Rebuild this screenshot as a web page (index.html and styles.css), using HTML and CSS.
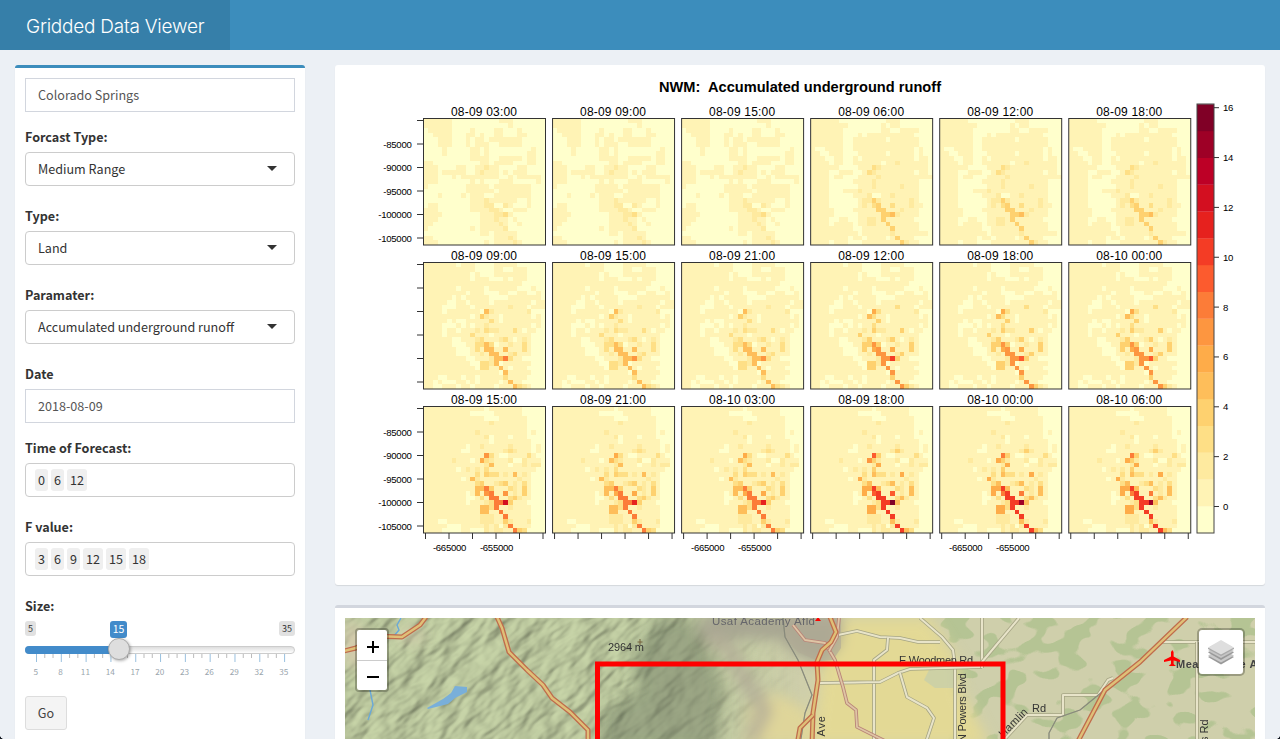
FILE: index.html
```html
<!DOCTYPE html>
<html lang="en">
<head>
<meta charset="utf-8">
<title>Gridded Data Viewer</title>
<link rel="stylesheet" href="styles.css">
</head>
<body>
<header class="header"><div class="logo"><span>Gridded Data Viewer</span></div></header>
<div class="content">
  <aside class="box sidebar">
    <div class="control input">Colorado Springs</div>
    <label class="label">Forcast Type:</label>
    <div class="control select">Medium Range<i class="caret"></i></div>
    <label class="label wide">Type:</label>
    <div class="control select">Land<i class="caret"></i></div>
    <label class="label wide">Paramater:</label>
    <div class="control select">Accumulated underground runoff<i class="caret"></i></div>
    <label class="label wide">Date</label>
    <div class="control input">2018-08-09</div>
    <label class="label">Time of Forecast:</label>
    <div class="control tags"><span>0</span><span>6</span><span>12</span></div>
    <label class="label wide">F value:</label>
    <div class="control tags"><span>3</span><span>6</span><span>9</span><span>12</span><span>15</span><span>18</span></div>
    <label class="label wide">Size:</label>
    <div class="slider">
      <div class="bounds"><span>5</span><span>35</span><b>15</b></div>
      <div class="track"><div class="fill"></div><div class="handle"></div></div>
      <svg class="ticks" width="270" height="8" id="ticks"></svg>
      <div class="scale"><span>5</span><span>8</span><span>11</span><span>14</span><span>17</span><span>20</span><span>23</span><span>26</span><span>29</span><span>32</span><span>35</span></div>
    </div>
    <button class="go">Go</button>
  </aside>
  <main class="main">
    <section class="box plotbox"><svg id="plot" width="930" height="520" viewBox="335 65 930 520"></svg></section>
    <section class="box mapbox">
      <div class="map">
        <svg id="map" width="910" height="121" viewBox="345 618 910 121">
          <defs>
            <filter id="relief" x="0" y="0" width="100%" height="100%" color-interpolation-filters="sRGB">
              <feTurbulence type="fractalNoise" baseFrequency="0.025 0.055" numOctaves="3" seed="8"/>
              <feDiffuseLighting surfaceScale="4.5" diffuseConstant="1.08" lighting-color="#c3cfa5"><feDistantLight azimuth="225" elevation="62"/></feDiffuseLighting>
            </filter>
            <filter id="patches" x="0" y="0" width="100%" height="100%" color-interpolation-filters="sRGB">
              <feTurbulence type="fractalNoise" baseFrequency="0.035 0.05" numOctaves="2" seed="21"/>
              <feColorMatrix values="0 0 0 0 .71  0 0 0 0 .77  0 0 0 0 .58  22 0 0 0 -11.8"/>
            </filter>
            <filter id="soft"><feGaussianBlur stdDeviation="7"/></filter>
            <linearGradient id="fade"><stop offset="0" stop-color="#fff"/><stop offset=".65" stop-color="#fff"/><stop offset=".95" stop-color="#000"/></linearGradient>
            <mask id="hills"><rect x="345" y="618" width="480" height="130" fill="url(#fade)"/></mask>
          </defs>
          <rect x="345" y="618" width="910" height="130" fill="#cfcfab"/>
          <rect x="345" y="618" width="480" height="130" fill="#b5c197" mask="url(#hills)"/>
          <g mask="url(#hills)"><g transform="rotate(-38 585 680)"><rect x="300" y="350" width="650" height="650" filter="url(#relief)" opacity=".7"/></g></g>
          <rect x="940" y="618" width="315" height="130" filter="url(#patches)"/>
          <g filter="url(#soft)">
            <path d="M826 618H930L960 665V690L990 745H812L820 680Z" fill="#e3d995"/>
            <path d="M750 705Q770 680 812 715V745H742Z" fill="#dfd59a"/>
            <path d="M700 615H842L840 645L820 665L795 655L780 640L700 638Z" fill="#a7a692"/>
            <path d="M708 635L730 650L745 680L765 710L750 740" fill="none" stroke="#b4ae98" stroke-width="13"/>
            <path d="M655 618H690L710 650L725 690L715 748H600V715L640 690L630 665Z" fill="#707c61" opacity=".5"/>
            <path d="M345 618L365 635V665H345M402 630H422V640H402Z" fill="#d6cbad"/>
          </g>
          <path d="M827 618H841V648L833 660L818 661L798 652L785 638V618Z" fill="#b0aa95" opacity=".65"/>
          <path d="M932 664H955V688H935L924 680Z" fill="#c3cdac" opacity=".7"/>
          <path d="M427 708L443 699L451 693L455 686L467 687V692L455 698L448 704L428 709Z" fill="#79afd9"/>
          <path d="M401 618L397 625L399 630L393 637M370 690L373 705L368 720" fill="none" stroke="#69a9d8" stroke-width="1.4"/>
          <g id="roads"></g>
          <g class="maplabel">
            <text x="712" y="625" textLength="103" class="grey">Usaf Academy Afld</text>
            <text x="608" y="651" textLength="36">2964 m</text>
            <path d="M640 639V645M637.500 642H642.500" stroke="#75623c"/>
            <text x="899" y="664" textLength="74">E Woodmen Rd</text>
            <text transform="translate(966 742) rotate(-90)" textLength="69">N Powers Blvd</text>
            <text transform="translate(825 747) rotate(-90)" textLength="31">a Ave</text>
            <text transform="translate(1003 738) rotate(-45)" textLength="36">Hamlin</text>
            <text x="1032" y="712">Rd</text>
            <text transform="translate(1208 742) rotate(-90)">s Rd</text>
            <text x="1176" y="668" textLength="85" class="place">Meadowlake Ai</text>
          </g>
          <path d="M818 617L821 621H815Z" fill="#f00"/>
          <path d="M1171 652L1172.300 650L1173.600 652V656.500L1180 660V662L1173.600 660.500V664L1176 666H1168.700L1171 664V660.500L1164 662V660L1171 656.500Z" fill="#f00"/>
          <rect x="597.500" y="664" width="405.500" height="120" fill="none" stroke="#f00" stroke-width="5"/>
        </svg>
        <div class="zoomer"><span><svg width="14" height="14"><path d="M1 7H13M7 1V13" stroke="#000" stroke-width="2"/></svg></span><span><svg width="14" height="14"><path d="M1 7H13" stroke="#000" stroke-width="2"/></svg></span></div>
        <div class="layers"><svg width="26" height="26"><path d="M0 18L13 11L26 18L13 25.500Z" fill="#999"/><path d="M0 16.500L13 9.500L26 16.500L13 23.500Z" fill="#c9c9c9"/><path d="M0 13.500L13 6.500L26 13.500L13 21Z" fill="#999"/><path d="M0 12L13 5L26 12L13 19Z" fill="#c5c5c5"/><path d="M0 9L13 2L26 9V10L13 17L0 10Z" fill="#aaa"/><path d="M0 8.500L13 1L26 8.500L13 15.500Z" fill="#dedede"/></svg></div>
      </div>
    </section>
  </main>
</div>
<div class="corners"></div>
<script src="app.js"></script>
</body>
</html>
```
FILE: styles.css
```css
* { box-sizing: border-box; }
body { margin: 0; height: 739px; overflow: hidden; background: #ecf0f5; color: #333; font: 12.6px/20px "Noto Sans CJK SC", "Noto Sans", sans-serif; }
.header { height: 50px; background: #3c8dbc; }
.logo { width: 230px; height: 50px; padding-left: 26px; background: #367fa9; color: #fff; font: 300 19px/54px Inter, "Liberation Sans", sans-serif; letter-spacing: -.24px; white-space: nowrap; }
.content { display: flex; align-items: flex-start; gap: 30px; height: 689px; padding: 15px 15px 0; }
.box { background: #fff; border-radius: 3px; box-shadow: 0 1px 1px rgba(0,0,0,.1); }
.sidebar { width: 290px; height: 674px; padding: 10px 10px 0; border-top: 3px solid #3c8dbc; border-radius: 3px 3px 0 0; flex: none; }
.control { height: 34px; padding: 0 12px; line-height: 31px; border: 1px solid #ccc; border-radius: 4px; white-space: nowrap; }
.input { border-color: #d2d6de; border-radius: 0; color: #555; }
.select { display: flex; justify-content: space-between; }
.caret { margin: 13px 5px 0 0; height: 0; border: 5px solid transparent; border-top-color: #333; border-bottom: 0; }
.label { display: block; margin: 15px 0 5px; font-weight: 700; }
.wide { margin-top: 20px; }
.tags { display: flex; gap: 3px; padding: 5px 9px; }
.tags span { height: 22px; line-height: 22px; padding: 0 3px; background: #efefef; border-radius: 3px; }
.slider { height: 60px; }
.bounds { position: relative; display: flex; justify-content: space-between; height: 25px; }
.bounds span { height: 15px; padding: 0 3px; line-height: 15px; font-size: 9px; background: #e1e1e1; border-radius: 3px; }
.bounds b { position: absolute; left: 85px; top: 0; width: 17px; height: 17px; font: 10.500px/15px "Noto Sans CJK SC", sans-serif; text-align: center; color: #fff; background: #428bca; border-radius: 3px; }
.track { position: relative; height: 8px; background: linear-gradient(#ddd, #fff); border: 1px solid #ccc; border-radius: 8px; }
.fill { width: 94px; height: 8px; margin: -1px; background: #428bca; border-radius: 8px 0 0 8px; }
.handle { position: absolute; left: 82px; top: -9px; width: 22px; height: 22px; border: 1px solid #aaa; border-radius: 50%; background: #dedede; box-shadow: 1px 1px 3px rgba(0,0,0,.3); }
.ticks { display: block; }
.scale { display: flex; margin: 4px -1.600px 0; font-size: 8.200px; line-height: 10px; color: #9aa5ad; }
.scale span { width: 24.800px; flex: none; text-align: center; }
.go { display: block; margin-top: 15px; width: 42px; height: 34px; padding: 0; border: 1px solid #ddd; border-radius: 3px; background: #f4f4f4; color: #444; font: inherit; }
.main { display: flex; flex-direction: column; gap: 20px; width: 930px; height: 674px; }
.plotbox { height: 520px; flex: none; }
.plotbox svg { display: block; font-family: "Liberation Sans", Arial, sans-serif; }
.plotbox .axis { font-size: 9.600px; letter-spacing: -.28px; }
.mapbox { height: 134px; padding: 10px 10px 0; border-top: 3px solid #d2d6de; border-radius: 3px 3px 0 0; }
.map { position: relative; height: 121px; overflow: hidden; }
.map > svg { display: block; }
.maplabel { font: 11px "Liberation Sans", Arial, sans-serif; fill: #333; }
.maplabel .grey { fill: #66666b; font-size: 11.500px; }
.maplabel .place { font-weight: 700; fill: #444; }
.zoomer { position: absolute; left: 10px; top: 10px; width: 34px; height: 64px; border: 2px solid rgba(0,0,0,.25); border-radius: 4px; background: #fff; background-clip: padding-box; }
.zoomer span { display: flex; align-items: center; justify-content: center; height: 30px; padding: 4px 0 0 2px; }
.zoomer span + span { border-top: 1px solid #ccc; padding-top: 2px; }
.layers { position: absolute; left: 852px; top: 10px; width: 48px; height: 48px; display: flex; align-items: center; justify-content: center; border: 2px solid rgba(0,0,0,.25); border-radius: 5px; background: #fff; background-clip: padding-box; }
.corners { position: absolute; inset: auto 0 0 0; height: 5px; background: radial-gradient(circle at 5px 0, transparent 5px, #161b24 5.500px) 0 0 / 5px 5px no-repeat, radial-gradient(circle at 0 0, transparent 5px, #161b24 5.500px) 100% 0 / 5px 5px no-repeat; }
```
FILE: app.js
```js
const colors = ['#ffffcc','#fff3b5','#feea9f','#fedf86','#fed16f','#febe5a','#feac49','#fd9640','#fc7c38','#fc5b2e','#f43c25','#e6211e','#d30f20','#bd0026','#9e0026','#800026'];

// Cumulative runoff levels, 26 cells across and 27 down
const hot = [
'..........................','..........................','..........................','..............2...........',
'..........................','...........2..............','.............2............','..........................',
'............2.....2.......','.................242......','.............94.......3...','......2.....742...2..2....',
'.............26......2.22.','.........2.2.4............','...........3.533.2.6.2....','..........62........2.....',
'...........35..235.2.3....','...........66a5...32.5....','...........6.9a..9.2.5....','............3.aa..352.....',
'.............23aaf5.......','............663a..2.......','............66..a.........','............222..a........',
'............222..52...2...','.............2.2.2a.......','.............2.22..a53....'];

// Cells outside the wet area
const masks = {
A:['11111100000000001110000000','11111100000000000010000000','01111100001000011000100000','00111100011010011000110000','00011100010110111111100000','00011100010111001111100000','00001000001101000000000100','00001000001101000000001100','00000000001111001111101100','11000000000011011110001100','11100001100111110000110000','11101111100111110101110000','11100010111111110010111110','11100000001010001110000010','10000000011111011111111000','00000000011111101111111000','00010000101110011111111000','00000000001111111111001000','01100000001111100110001000','11100000001111111001110000','11110000000011111110000000','11100000000011111101000000','11000000000011111100100000','10000000001011111100000000','00000000000011011111000000','11000000000000011111000000','11100000000001011111100000'],
B:['11111100000000001110000000','11111111000000010110000000','11111110000000011001111000','11111110001011011111110000','11111110011111110111111000','11111110011111111111111000','10011110011111111111110100','11001110001111110111110100','11100110010111111111110110','11110110011111101111111110','11111100001111011111110110','11110011100111111111110110','11110110001111111111111011','11110000011111111111111000','11110000001111111111111000','11110001111111111111111000','11110000011110001111111000','11110000001110111111111000','11110000001111111111111100','11111000011111111111111000','11111000001111111111111000','11110011001111111111110000','11110111101111111111111000','11111111100111111111111000','11111111110111011111111110','11111111011011110111110000','11110111000111101111111000'],
C:['11111110111000011111000000','11111111111000011001110000','11111111110100011111110000','11111111110111000101110000','11111111111111111111100000','11111110111110111111000100','11111111101110001100110010','11111101011111000011111110','11111001101111011111111011','11110001110111111111110111','11110111111100111111111000','11111111110111110111111010','11111010011111110111111110','11110001010111111111111010','11110110111110111111101100','11110111110111011111111000','11111100111111110110111000','11111100011111101111111000','11111110001111111111111000','11111110001111111101111000','11111111100111111111100000','11111111110011110111111000','11111111111011111101110000','11111111111111110111111000','11100111011011111111110000','11010001101011110111100000','11001110110111101111111000'],
E:['11111111111110111111100000','11111111110000011111100000','11111111111110001111110000','11111111111111011111110000','11111111111111111111110000','11111111111111111111110100','11111111111111011101110000','11111111111111011111111000','11111111101111111111111010','11111111001111111111111010','11111111111111110011111100','11111111110111111110011110','11111111111111111101111110','11111110111111111111111100','11111111111111111111111000','11111111011111111111111000','11111111111111111111111000','11111111111111111111111000','11111111101111111111111000','11111111100111111111111000','11111111101111111111110000','11111111111111111101111000','11111111111111111111111000','11111111111111111111111000','11100111111111111111111000','11111000111110110111111000','11110000110001111111110000']};
const plot = document.getElementById('plot');
const maps = {
A:{6:1,7:2,9:2,a:2,f:3}, B:{2:1,3:1,4:2,5:2,6:2,7:3,9:3,a:4,f:5},
C:{3:2,4:2,5:3,6:3,7:4,9:5,a:5,f:8}, D:{3:2,4:3,5:4,6:4,7:5,9:6,a:7,f:10},
E:{2:2,3:3,4:3,5:4,6:5,7:6,9:7,a:8,f:12}, F:{2:2,3:3,4:4,5:5,6:6,7:7,9:9,a:10,f:15}};
const titles = ['08-09 03:00','08-09 09:00','08-09 15:00','08-09 06:00','08-09 12:00','08-09 18:00','08-09 09:00','08-09 15:00','08-09 21:00','08-09 12:00','08-09 18:00','08-10 00:00','08-09 15:00','08-09 21:00','08-10 03:00','08-09 18:00','08-10 00:00','08-10 06:00'];
let s = '<text x="800" y="92" font-size="14.6" font-weight="700" text-anchor="middle" xml:space="preserve" textLength="282">NWM:  Accumulated underground runoff</text>';
titles.forEach((title, i) => {
  const r = Math.floor(i / 6), c = i % 6, x = 423.5 + c * 129.05, y = 118.5 + r * 144;
  const kind = 'ABCDEF'[r * 2 + (c > 2 ? 1 : 0)], mask = masks[{D:'C',F:'E'}[kind] || kind];
  s += `<text x="${x + 60.5}" y="${y - 3}" font-size="12" text-anchor="middle" textLength="66">${title}</text><g shape-rendering="crispEdges">`;
  for (let j = 0; j < 27; j++) for (let k = 0; k < 26; k++) {
    const h = hot[j][k];
    let v = maps[kind][h] ?? +mask[j][k];
    if (h === 'f' && c % 3 && r) v -= 1;
    if (/[79]/.test(h) && c % 3 && r === 2) v -= 1;
    s += `<rect x="${x + k * 4.692}" y="${y + j * 4.685}" width="4.75" height="4.75" fill="${colors[v]}"/>`;
  }
  s += `</g><rect x="${x}" y="${y}" width="122" height="126.500" fill="none" stroke="#333"/>`;
});
const line = (x1, y1, x2, y2) => { s += `<path d="M${x1} ${y1}L${x2} ${y2}" stroke="#333"/>`; };
for (let r = 0; r < 3; r++) for (let i = 0; i < 6; i++) {
  const y = 120.5 + r * 144 + i * 23.5;
  line(417, y, 423, y);
  if (r !== 1 && i) s += `<text class="axis" x="411.5" y="${y + 3.5}" text-anchor="end">${-80000 - i * 5000}</text>`;
}
for (let c = 0; c < 6; c++) for (let i = 0; i < 6; i++) {
  const x = 425.5 + c * 129.05 + i * 23.5;
  line(x, 533, x, 539);
  if (c % 2 === 0 && (i === 1 || i === 3)) s += `<text class="axis" x="${x + .5}" y="551" text-anchor="middle">${i === 1 ? -665000 : -655000}</text>`;
}
for (let i = 0; i < 16; i++) s += `<rect x="1197" y="${506.2 - i * 26.8}" width="17" height="27" fill="${colors[i]}"/>`;
s += '<rect x="1197" y="104" width="17" height="429" fill="none" stroke="#444"/>';
for (let i = 0; i < 9; i++) { const y = 506.5 - i * 49.85; line(1214, y, 1219, y); s += `<text class="axis" x="1223" y="${y + 3.5}">${i * 2}</text>`; }
plot.innerHTML = s;

// Slider ticks: ten major steps with two minor ticks in each
let t = '';
for (let i = 0; i <= 30; i++) { const x = 11.5 + i * 8.27, major = i % 3 === 0; t += `<path d="M${x} 0V${major ? 8 : 4}" stroke="${major ? '#99c0df' : '#bbb'}"/>`; }
document.getElementById('ticks').innerHTML = t;

const roads = document.getElementById('roads');
const road = (d, kind) => {
  const [edge, w, fill, fw] = {
    main: ['#c06c4c', 5, '#dfc078', 2.4], local: ['#a5a484', 3.6, '#e8e4c9', 2], pink: ['#b98578', 3.6, '#dec5a5', 1.8], rail: ['#898b7c', 1.2, '#898b7c', .5]
  }[kind];
  roads.innerHTML += `<g fill="none" stroke-linejoin="round"><path d="${d}" stroke="${edge}" stroke-width="${w}"/><path d="${d}" stroke="${fill}" stroke-width="${fw}"/></g>`;
};
['M838 635L857 631L880 637L900 638L918 642H940','M920 618L942 637L953 650L955 665V745','M888 638L887 650L874 660V745','M820 683L880 682L898 673L910 669L982 667','M900 673L907 697L927 708L934 718L925 745','M982 618V668','M1019 618L982 662','M1003 741L1027 715H1063V695H1098L1108 680L1113 678','M1162 642H1255','M1197 642V745'].forEach(d => road(d, 'local'));
road('M793 625L805 640L825 643L835 660L843 687L847 703L856 710L857 727L885 741', 'pink');
road('M839 618L837 637L829 651', 'pink');
['M783 618L785 637L798 660L812 695L805 713L800 745','M1102 692L1080 710L1057 718L1049 733V745'].forEach(d => road(d, 'rail'));
['M497 617L502 628L509 652L527 670L543 685L552 698L570 712L588 730V745','M340 652L356 648L375 636L402 637L420 625L426 617','M830 617L836 632L831 642L822 650L817 662L818 680L813 713L812 745','M813 715L800 728L797 745','M1187 617L1140 662L1105 690L1076 745'].forEach(d => road(d, 'main'));
```
